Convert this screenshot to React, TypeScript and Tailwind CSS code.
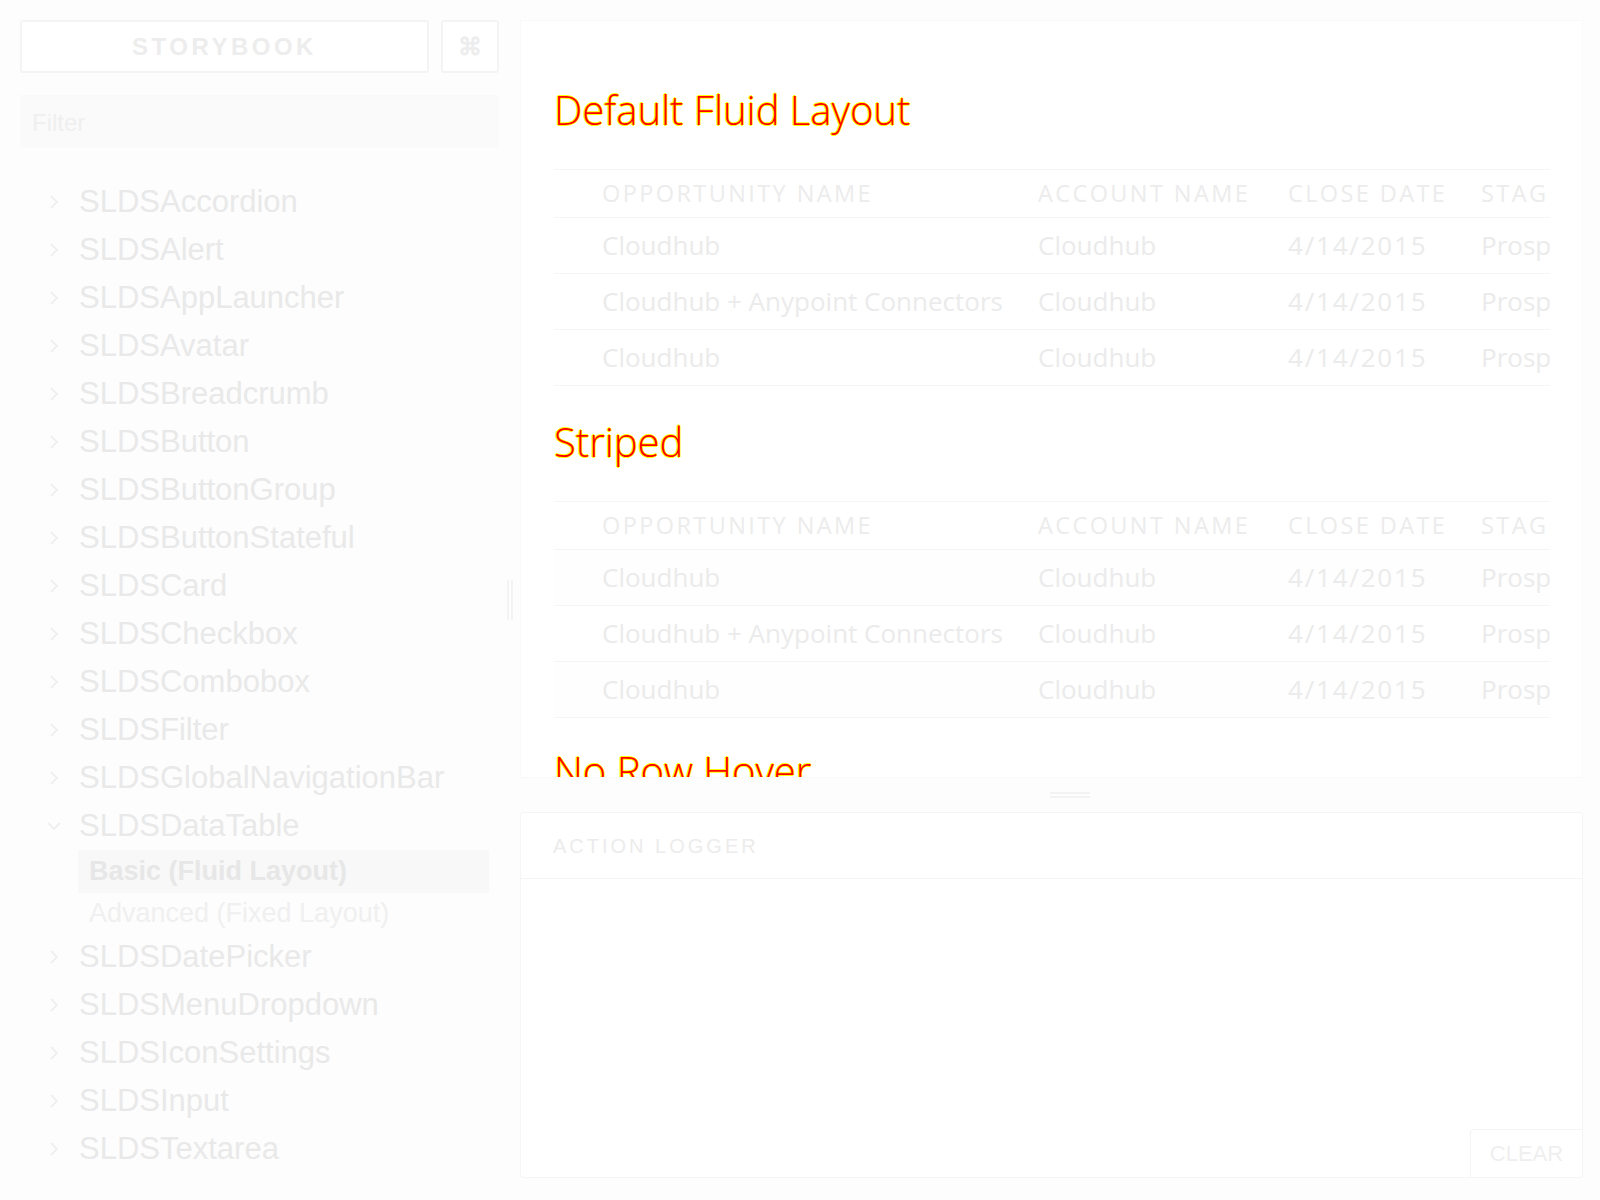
const components = [
  "SLDSAccordion",
  "SLDSAlert",
  "SLDSAppLauncher",
  "SLDSAvatar",
  "SLDSBreadcrumb",
  "SLDSButton",
  "SLDSButtonGroup",
  "SLDSButtonStateful",
  "SLDSCard",
  "SLDSCheckbox",
  "SLDSCombobox",
  "SLDSFilter",
  "SLDSGlobalNavigationBar",
];

const after = ["SLDSDatePicker", "SLDSMenuDropdown", "SLDSIconSettings", "SLDSInput", "SLDSTextarea"];

const rows = [
  { name: "Cloudhub", account: "Cloudhub", date: "4/14/2015", stage: "Prospecting" },
  { name: "Cloudhub + Anypoint Connectors", account: "Cloudhub", date: "4/14/2015", stage: "Prospecting" },
  { name: "Cloudhub", account: "Cloudhub", date: "4/14/2015", stage: "Prospecting" },
];

function Chevron({ down }: { down?: boolean }) {
  return (
    <svg width="16" height="16" viewBox="0 0 16 16" className="shrink-0">
      <path
        d={down ? "M2 5 L8 11 L14 5" : "M5 2 L11 8 L5 14"}
        fill="none"
        stroke="#efefef"
        strokeWidth="1.8"
      />
    </svg>
  );
}

function TreeItem({ label, down }: { label: string; down?: boolean }) {
  return (
    <div className="flex h-[48px] items-center">
      <div className="flex w-[59px] justify-end pr-[17px]">
        <Chevron down={down} />
      </div>
      <span className="text-[31px] text-[#e9e9e9]">{label}</span>
    </div>
  );
}

const heading =
  "h-[52px] text-[40px] font-light leading-[52px] text-[#ff0000] [text-shadow:1px_0_#ffff00,-1px_0_#ffff00,0_1px_#ffff00,0_-1px_#ffff00]";

const th = "text-[23.5px] font-normal tracking-[2.4px] text-[#ececec]";
const td = "whitespace-nowrap text-[26px] text-[#ebebeb]";

function DataTable({ striped }: { striped?: boolean }) {
  return (
    <div className="mr-[32px] overflow-hidden">
      <table className="w-[1060px] table-fixed border-collapse">
        <colgroup>
          <col className="w-[468px]" />
          <col className="w-[250px]" />
          <col className="w-[193px]" />
          <col />
        </colgroup>
        <thead>
          <tr className="h-[48px] border-y border-[#f5f5f5] text-left">
            <th className={`pl-[48px] ${th}`}>OPPORTUNITY NAME</th>
            <th className={`pl-[16px] ${th}`}>ACCOUNT NAME</th>
            <th className={`pl-[16px] ${th}`}>CLOSE DATE</th>
            <th className={`pl-[16px] ${th}`}>STAGE</th>
          </tr>
        </thead>
        <tbody>
          {rows.map((r, i) => (
            <tr
              key={i}
              className={`h-[56px] border-b border-[#f5f5f5] ${striped && i % 2 === 0 ? "bg-[#fefefe]" : "bg-white"}`}
            >
              <td className={`pl-[48px] ${td}`}>{r.name}</td>
              <td className={`pl-[16px] ${td}`}>{r.account}</td>
              <td className={`pl-[16px] tracking-[1.8px] ${td}`}>{r.date}</td>
              <td className={`pl-[16px] ${td}`}>{r.stage}</td>
            </tr>
          ))}
        </tbody>
      </table>
    </div>
  );
}

export default function App() {
  return (
    <div className="flex h-[1200px] w-[1600px] overflow-hidden bg-[#fdfdfd] font-['Liberation_Sans',sans-serif]">
      <aside className="flex w-[500px] shrink-0 flex-col pl-[20px] pr-[1px] pt-[20px]">
        <div className="flex h-[53px] gap-[12px]">
          <div className="flex flex-1 items-center justify-center rounded-[3px] border-2 border-[#f4f4f4] bg-white text-[24px] font-bold tracking-[3.5px] text-[#ededed]">
            STORYBOOK
          </div>
          <div className="flex w-[58px] items-center justify-center rounded-[3px] border-2 border-[#f4f4f4] bg-white text-[24px] font-bold text-[#ededed]">
            ⌘
          </div>
        </div>
        <div className="mt-[22px] flex h-[53px] items-center bg-[#fafafa] pl-[12px] pt-[3px] text-[24px] text-[#efefef]">
          Filter
        </div>
        <div className="mt-[30px] flex flex-col">
          {components.map((c) => (
            <TreeItem key={c} label={c} />
          ))}
          <TreeItem label="SLDSDataTable" down />
          <div className="ml-[58px] mr-[10px] flex h-[43px] items-center bg-[#f8f8f8] pl-[11px] text-[27px] font-bold text-[#e7e7e7]">
            Basic (Fluid Layout)
          </div>
          <div className="ml-[58px] flex h-[40px] items-center pl-[11px] text-[27px] text-[#f0f0f0]">
            Advanced (Fixed Layout)
          </div>
          {after.map((c) => (
            <TreeItem key={c} label={c} />
          ))}
        </div>
      </aside>

      <div className="flex w-[20px] shrink-0 items-center justify-center">
        <div className="flex h-[40px] gap-[2px]">
          <div className="w-[2px] bg-[#f3f3f3]" />
          <div className="w-[2px] bg-[#f3f3f3]" />
        </div>
      </div>

      <main className="flex min-w-0 flex-1 flex-col pr-[17px] pt-[20px]">
        <div className="h-[758px] shrink-0 overflow-hidden border border-[#f9f9f9] bg-white pl-[33px] font-['Open_Sans',sans-serif]">
          <div className={`mt-[63px] ${heading}`}>Default Fluid Layout</div>
          <div className="mt-[33px]">
            <DataTable />
          </div>
          <div className={`mt-[30px] ${heading}`}>Striped</div>
          <div className="mt-[33px]">
            <DataTable striped />
          </div>
          <div className={`mt-[27px] ${heading}`}>No Row Hover</div>
        </div>

        <div className="flex h-[34px] shrink-0 flex-col items-center justify-center gap-[2px] pl-[36px]">
          <div className="h-[2px] w-[40px] bg-[#f3f3f3]" />
          <div className="h-[2px] w-[40px] bg-[#f3f3f3]" />
        </div>

        <div className="flex h-[366px] shrink-0 flex-col overflow-hidden rounded-[3px] border border-[#f5f5f5] bg-white">
          <div className="flex h-[66px] shrink-0 items-center border-b border-[#f5f5f5] pl-[32px] text-[20px] tracking-[3px] text-[#ececec]">
            ACTION LOGGER
          </div>
          <div className="flex flex-1 items-end justify-end">
            <div className="flex h-[48px] w-[112px] items-center justify-center rounded-tl-[4px] border-l border-t border-[#f4f4f4] text-[22px] text-[#efefef]">
              CLEAR
            </div>
          </div>
        </div>
      </main>
    </div>
  );
}
